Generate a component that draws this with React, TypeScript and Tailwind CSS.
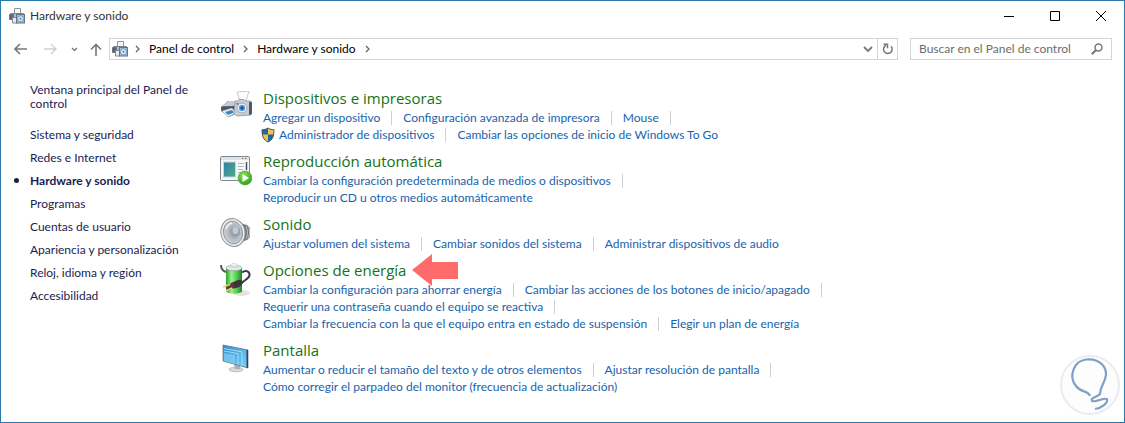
import React from 'react';

type Task = { label: string; shield?: boolean };

type Category = {
  title: string;
  icon: React.ReactNode;
  rows: Task[][];
  highlighted?: boolean;
};

const HardwareIcon = () => (
  <svg viewBox="0 0 16 16" className="size-4 shrink-0" aria-hidden="true">
    <path d="M5.500.5h6v5h-6z" fill="#f4f6f8" stroke="#8d959e" />
    <path d="M1.500 5.500h13v6h-13z" fill="#b4bbc3" stroke="#7a848e" />
    <path d="M.5 6.500h4v5h-4z" fill="#5a6570" stroke="#6a747e" />
    <path d="M3.500 9.500h5v5.500h-5z" fill="#e6edf3" stroke="#7d8893" />
    <rect x="7.500" y="6.500" width="8" height="8.500" fill="#a9bccd" stroke="#647482" />
    <circle cx="11.500" cy="10.800" r="3" fill="#e3f0fa" stroke="#6a97bf" />
    <circle cx="11.500" cy="10.800" r="1" fill="#3b79b2" />
  </svg>
);

const DevicesIcon = () => (
  <svg viewBox="0 0 32 32" className="size-8" aria-hidden="true">
    <path d="m1 16 7-6h10l-2 13-7 3-8-6z" fill="#7b848b" />
    <path d="m2 15 7-5h8l-3 5z" fill="#c6ccd1" />
    <path d="m1 16 13-1v4L2 21z" fill="#4b545c" />
    <path d="m2 20 10-3 4 5-8 4z" fill="#e9f2f8" stroke="#8ea0ae" strokeWidth=".6" />
    <path d="m5 21 7-2 2 2.500-6 2.500z" fill="#3d87b8" />
    <path d="m17 1 12-1-3 10H20z" fill="#fdfdfd" stroke="#b5babf" strokeWidth=".8" />
    <path d="M15 10h3l1-1.500h5l1 1.500h6v14l-14 1-3-2z" fill="#c6cfd6" stroke="#8b98a3" strokeWidth=".8" />
    <path d="M29 11h3v12l-3 1z" fill="#4f5963" />
    <circle cx="22" cy="17" r="5" fill="#eef3f7" stroke="#9aa9b5" />
    <circle cx="22" cy="17" r="3.200" fill="#5da2d8" />
    <circle cx="22" cy="17" r="1.700" fill="#14508d" />
    <path d="M16.500 12h2v1.500h-2z" fill="#5f7485" />
  </svg>
);

const AutoplayIcon = () => (
  <svg viewBox="0 0 32 32" className="size-8" aria-hidden="true">
    <defs>
      <linearGradient id="photo" x1="0" y1="0" x2="1" y2="1">
        <stop offset="0" stopColor="#2f7fb5" />
        <stop offset="1" stopColor="#4fae7c" />
      </linearGradient>
      <radialGradient id="play" cx=".4" cy=".3" r=".8">
        <stop offset="0" stopColor="#8ede4e" />
        <stop offset="1" stopColor="#249a1c" />
      </radialGradient>
    </defs>
    <rect x=".5" y="2.500" width="29" height="24" rx="1" fill="#f7f8f9" stroke="#7f878e" />
    <path d="M1 3h28v3H1z" fill="#dfe3e6" />
    <path d="M22 4.500h1.500m1.500 0h1.500" stroke="#6f777e" />
    <rect x="3.500" y="8" width="12" height="15" fill="url(#photo)" stroke="#cdd3d8" />
    <path d="M18 9.500h6m-6 3h6m-6 3h5m-5 3h3" stroke="#b3bac0" />
    <path d="M26.500 8v8" stroke="#4a5259" strokeWidth="1.500" />
    <circle cx="25" cy="24" r="7" fill="url(#play)" stroke="#4ba83a" strokeWidth=".6" />
    <path d="m22.500 20 6.500 4-6.500 4z" fill="#fff" />
  </svg>
);

const SoundIcon = () => (
  <svg viewBox="0 0 32 32" className="size-8" aria-hidden="true">
    <defs>
      <radialGradient id="cone" cx=".55" cy=".5" r=".6">
        <stop offset="0" stopColor="#858d94" />
        <stop offset=".5" stopColor="#b4babf" />
        <stop offset="1" stopColor="#d3d8dc" />
      </radialGradient>
    </defs>
    <path d="m16 2 7 5 4 1 3 3v9l-3 3-3 1-8 6z" fill="#70777c" />
    <path d="M26 9c2 5 2 9 0 13M28.500 10.500c1.500 3 1.500 6 0 10" fill="none" stroke="#c3c8cb" />
    <ellipse cx="13" cy="15.500" rx="12" ry="14" fill="#eceeef" stroke="#8a9094" transform="rotate(-12 13 15.500)" />
    <ellipse cx="13" cy="15.500" rx="9.500" ry="11.500" fill="url(#cone)" stroke="#81888d" strokeWidth=".8" transform="rotate(-12 13 15.500)" />
    <ellipse cx="16" cy="14.500" rx="4" ry="5" fill="#8e9aa5" />
    <ellipse cx="15.500" cy="13.500" rx="3" ry="3.800" fill="#bfcad4" />
    <path d="M6 12c1-3 3-5 6-6" fill="none" stroke="#f3f5f6" strokeWidth="1.500" />
  </svg>
);

const PowerIcon = () => (
  <svg viewBox="0 0 32 36" className="h-9 w-8" aria-hidden="true">
    <defs>
      <linearGradient id="cell" x1="0" x2="1">
        <stop offset="0" stopColor="#2ca12c" />
        <stop offset=".35" stopColor="#9cf08c" />
        <stop offset=".7" stopColor="#4cc849" />
        <stop offset="1" stopColor="#1d8422" />
      </linearGradient>
    </defs>
    <path d="M1 2c0 4 2 6 5 7" fill="none" stroke="#55565f" strokeWidth="2" />
    <ellipse cx="21" cy="30" rx="9" ry="3" fill="#e3e3e3" />
    <path d="M6 5v23c0 3.500 16 3.500 16 0V5z" fill="url(#cell)" />
    <ellipse cx="14" cy="5" rx="8" ry="2.800" fill="#e3e9e6" stroke="#8da092" strokeWidth=".7" />
    <path d="M10.500 2h7v2.500h-7z" fill="#c9cfd2" />
    <ellipse cx="14" cy="2" rx="3.500" ry="1.500" fill="#f3f5f6" stroke="#b9c0c3" strokeWidth=".5" />
    <path d="M22 9.500c4-3 8-1 7.500 3-.5 3-5.500 5-8.500 8" fill="none" stroke="#3c3349" strokeWidth="2" />
    <path d="m11 20 7-3c3-1 5 0 4.500 3-.5 3-5.500 5.500-9.500 5.500z" fill="#3b3540" />
    <path d="m5 23 7-3 3 4-7 4z" fill="#5b4033" />
    <path d="m3 24 7-2.500M6 28l6-3" stroke="#f0cf86" strokeWidth="1.500" />
  </svg>
);

const DisplayIcon = () => (
  <svg viewBox="0 0 32 32" className="size-8" aria-hidden="true">
    <defs>
      <linearGradient id="screen" x1="0" y1="0" x2="1" y2="1">
        <stop offset="0" stopColor="#2b8fd6" />
        <stop offset="1" stopColor="#79d3f7" />
      </linearGradient>
    </defs>
    <ellipse cx="16" cy="26.500" rx="7" ry="2.300" fill="#d5d9dc" stroke="#a3aaaf" strokeWidth=".6" />
    <path d="m14 21 6 1v4h-5z" fill="#a9b0b6" />
    <path d="m3 2 25 5v18L3 18z" fill="url(#screen)" stroke="#6c7780" strokeWidth=".8" />
    <path d="m26.500 6.700 1.500.3v18l-1.500-.4z" fill="#39434c" />
    <path d="m4 8 14 2.600v11.200M4 5.500l18 3.400v14" fill="none" stroke="#b9e6fb" strokeWidth=".8" />
    <path d="m4 10 11 2v9L4 18z" fill="#8fd6f7" opacity=".6" />
  </svg>
);

const ShieldIcon = () => (
  <svg viewBox="0 0 14 16" className="h-4 w-3.5" aria-hidden="true">
    <path d="M7 1c2 1.300 4 1.700 6 1.700C13 9 11.500 13 7 15z" fill="#f1c643" />
    <path d="M7 1C5 2.300 3 2.700 1 2.700 1 9 2.500 13 7 15z" fill="#2566a8" />
    <path d="M1.200 7.500H7V15C3.500 13.500 1.800 11 1.200 7.500z" fill="#f1c643" />
    <path d="M7 7.500h5.800C12.200 11 10.500 13.500 7 15z" fill="#2566a8" />
    <path d="M7 1c2 1.300 4 1.700 6 1.700C13 9 11.500 13 7 15 2.500 13 1 9 1 2.700 3 2.700 5 2.300 7 1z" fill="none" stroke="#4c5966" />
  </svg>
);

const sidebarLinks = [
  'Sistema y seguridad',
  'Redes e Internet',
  'Hardware y sonido',
  'Programas',
  'Cuentas de usuario',
  'Apariencia y personalización',
  'Reloj, idioma y región',
  'Accesibilidad',
];

const categories: Category[] = [
  {
    title: 'Dispositivos e impresoras',
    icon: <DevicesIcon />,
    rows: [
      [{ label: 'Agregar un dispositivo' }, { label: 'Configuración avanzada de impresora' }, { label: 'Mouse' }],
      [{ label: 'Administrador de dispositivos', shield: true }, { label: 'Cambiar las opciones de inicio de Windows To Go' }],
    ],
  },
  {
    title: 'Reproducción automática',
    icon: <AutoplayIcon />,
    rows: [
      [{ label: 'Cambiar la configuración predeterminada de medios o dispositivos' }],
      [{ label: 'Reproducir un CD u otros medios automáticamente' }],
    ],
  },
  {
    title: 'Sonido',
    icon: <SoundIcon />,
    rows: [
      [{ label: 'Ajustar volumen del sistema' }, { label: 'Cambiar sonidos del sistema' }, { label: 'Administrar dispositivos de audio' }],
    ],
  },
  {
    title: 'Opciones de energía',
    icon: <PowerIcon />,
    highlighted: true,
    rows: [
      [{ label: 'Cambiar la configuración para ahorrar energía' }, { label: 'Cambiar las acciones de los botones de inicio/apagado' }],
      [{ label: 'Requerir una contraseña cuando el equipo se reactiva' }],
      [{ label: 'Cambiar la frecuencia con la que el equipo entra en estado de suspensión' }, { label: 'Elegir un plan de energía' }],
    ],
  },
  {
    title: 'Pantalla',
    icon: <DisplayIcon />,
    rows: [
      [{ label: 'Aumentar o reducir el tamaño del texto y de otros elementos' }, { label: 'Ajustar resolución de pantalla' }],
      [{ label: 'Cómo corregir el parpadeo del monitor (frecuencia de actualización)' }],
    ],
  },
];

const TitleBar = () => (
  <header className="flex h-[29px] items-center pl-2">
    <HardwareIcon />
    <h1 className="ml-[5px] flex-1 text-[#333]">Hardware y sonido</h1>
    <div className="flex h-full">
      <button aria-label="Minimizar" className="flex w-[46px] items-center justify-center">
        <svg viewBox="0 0 10 10" className="size-2.5"><path d="M0 5.500h10" stroke="#000" /></svg>
      </button>
      <button aria-label="Maximizar" className="flex w-[46px] items-center justify-center">
        <svg viewBox="0 0 10 10" className="size-2.5"><path d="M.5.5h9v9h-9z" fill="none" stroke="#000" /></svg>
      </button>
      <button aria-label="Cerrar" className="flex w-[46px] items-center justify-center">
        <svg viewBox="0 0 10 10" className="size-2.5"><path d="m0 0 10 10M10 0 0 10" stroke="#000" /></svg>
      </button>
    </div>
  </header>
);

const Crumb = () => (
  <svg viewBox="0 0 5 8" className="h-2 w-[5px] shrink-0" aria-hidden="true">
    <path d="m1 1 3 3-3 3" fill="none" stroke="#666" strokeWidth="1.300" />
  </svg>
);

const NavBar = () => (
  <div className="flex h-[38px] items-center pr-3 pl-[13px]">
    <button aria-label="Atrás">
      <svg viewBox="0 0 13 12" className="h-3 w-[13px]"><path d="M13 6H1.500M6 1 1 6l5 5" fill="none" stroke="#777" strokeWidth="1.600" /></svg>
    </button>
    <button aria-label="Adelante" className="ml-[17px]">
      <svg viewBox="0 0 13 12" className="h-3 w-[13px]"><path d="M0 6h11.500M7 1l5 5-5 5" fill="none" stroke="#cfcfcf" strokeWidth="1.300" /></svg>
    </button>
    <button aria-label="Ubicaciones recientes" className="ml-[14px]">
      <svg viewBox="0 0 7 5" className="h-[5px] w-[7px]"><path d="m1 1 2.500 2.500L6 1" fill="none" stroke="#777" strokeWidth="1.300" /></svg>
    </button>
    <button aria-label="Subir" className="ml-3">
      <svg viewBox="0 0 12 13" className="h-[13px] w-3"><path d="M6 13V1.500M1 6.500l5-5 5 5" fill="none" stroke="#777" strokeWidth="1.600" /></svg>
    </button>
    <nav className="ml-[7px] flex h-[22px] flex-1 items-center border border-[#d4d4d4] pl-0.5">
      <HardwareIcon />
      <div className="flex flex-1 items-center gap-[9px] pl-[7px] text-black">
        <Crumb />
        <a href="#panel">Panel de control</a>
        <Crumb />
        <a href="#hardware">Hardware y sonido</a>
        <Crumb />
      </div>
      <button aria-label="Ubicaciones anteriores" className="flex h-full w-[19px] items-center justify-center border-r border-[#d4d4d4]">
        <svg viewBox="0 0 10 7" className="h-[7px] w-2.5"><path d="m1 1 4 4 4-4" fill="none" stroke="#777" strokeWidth="1.800" /></svg>
      </button>
      <button aria-label="Actualizar" className="flex h-full w-[19px] items-center justify-center">
        <svg viewBox="0 0 12 12" className="size-3">
          <path d="M4 2.300A4.300 4.300 0 1 0 9 3.300" fill="none" stroke="#777" strokeWidth="1.500" />
          <path d="M1.500 1.200h4v4" fill="none" stroke="#777" strokeWidth="1.500" />
        </svg>
      </button>
    </nav>
    <label className="ml-3 flex h-[22px] w-[202px] items-center border border-[#d4d4d4] px-2">
      <input
        type="text"
        aria-label="Buscar en el Panel de control"
        placeholder="Buscar en el Panel de control"
        className="min-w-0 flex-1 outline-none placeholder:text-[#6d6d6d]"
      />
      <svg viewBox="0 0 12 12" className="size-3 shrink-0" aria-hidden="true">
        <circle cx="7.500" cy="4.500" r="3.500" fill="none" stroke="#777" strokeWidth="1.500" />
        <path d="M5 7 .8 11.200" stroke="#777" strokeWidth="2" />
      </svg>
    </label>
  </div>
);

const Sidebar = () => (
  <aside className="w-[219px] shrink-0 pt-[15px] pl-[29px] text-[#1c1c50]">
    <a href="#inicio" className="block w-[170px] leading-[14px]">Ventana principal del Panel de control</a>
    <ul className="mt-3 leading-[23px]">
      {sidebarLinks.map(link => (
        <li key={link} className="relative">
          {link === 'Hardware y sonido' ? (
            <>
              <span className="absolute top-[9px] -left-4 size-[5px] rounded-full bg-[#1c1c50]" />
              <a href="#hardware" aria-current="page" className="font-bold">{link}</a>
            </>
          ) : (
            <a href="#categoria">{link}</a>
          )}
        </li>
      ))}
    </ul>
  </aside>
);

const CategoryBlock: React.FC<{ category: Category }> = ({ category }) => {
  const { title, icon, rows, highlighted } = category;

  return (
    <section className="flex">
      <div className="h-8 w-[43px] shrink-0 pt-[3px]">{icon}</div>
      <div>
        <h2 className="relative w-fit font-['Open_Sans','Noto_Sans',sans-serif] text-[15px] leading-[21px] text-[#157315]">
          <a href="#categoria">{title}</a>
          {highlighted && (
            <svg viewBox="0 0 46 32" className="absolute -top-1.5 left-full ml-1.5 h-8 w-[46px]" aria-hidden="true">
              <path d="M0 16 20 0v8h26v17H20v7z" fill="#ff6b6b" />
            </svg>
          )}
        </h2>
        {rows.map((row, i) => (
          <ul key={i} className="flex h-[17px] items-center whitespace-nowrap text-[#1763ad]">
            {row.map((task, j) => (
              <li key={task.label} className="flex items-center">
                {task.shield && <span className="-ml-0.5 mr-1"><ShieldIcon /></span>}
                <a href="#tarea">{task.label}</a>
                {(i < rows.length - 1 || j < row.length - 1) && <span className="mx-[11px] h-3.5 w-px bg-[#d0d0d0]" />}
              </li>
            ))}
          </ul>
        ))}
      </div>
    </section>
  );
};

const Watermark = () => (
  <svg viewBox="0 0 62 62" className="absolute right-1 bottom-1.5 size-[62px]" aria-hidden="true">
    <circle cx="32" cy="31" r="29" fill="#fdfdfe" stroke="#ebecf0" strokeWidth="2" />
    <path
      d="M32 42c-2-6-9-3-14-10C10 22 16 7 28 5.500 42 4 51 14 47 25c-2 6-5 9-5 15-3 3-10 4-8 7 2 2 13-4 15-2 1 4-5 9-12 10"
      fill="none"
      stroke="#7f9fc6"
      strokeWidth="2.200"
    />
  </svg>
);

export default function App() {
  return (
    <div className="relative flex min-h-screen flex-col border border-[#2779ae] bg-white font-['Lato','Open_Sans',sans-serif] text-xs">
      <TitleBar />
      <NavBar />
      <div className="flex flex-1">
        <Sidebar />
        <main className="flex flex-1 flex-col gap-2 pt-5">
          {categories.map(category => (
            <CategoryBlock key={category.title} category={category} />
          ))}
        </main>
      </div>
      <Watermark />
    </div>
  );
}
